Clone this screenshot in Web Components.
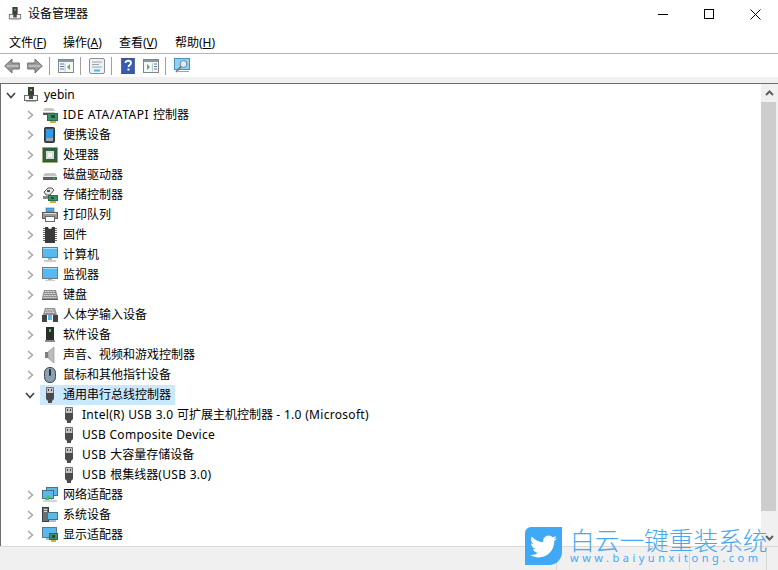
<!doctype html>
<html lang="zh">
<title>设备管理器</title>
<style>
  html, body { margin: 0; height: 100%; background: #fff; }
</style>

<dm-window>
  <dm-titlebar slot="title">设备管理器</dm-titlebar>
  <dm-menubar slot="menu"></dm-menubar>
  <dm-toolbar slot="tools"></dm-toolbar>
  <dm-tree slot="tree">
    <dm-node level="0" state="open" icon="host">yebin</dm-node>
    <dm-node icon="ide"><span style="letter-spacing:.55px">IDE ATA/ATAPI </span>控制器</dm-node>
    <dm-node icon="portable">便携设备</dm-node>
    <dm-node icon="cpu">处理器</dm-node>
    <dm-node icon="disk">磁盘驱动器</dm-node>
    <dm-node icon="storage">存储控制器</dm-node>
    <dm-node icon="printer">打印队列</dm-node>
    <dm-node icon="chip">固件</dm-node>
    <dm-node icon="computer">计算机</dm-node>
    <dm-node icon="monitor">监视器</dm-node>
    <dm-node icon="keyboard">键盘</dm-node>
    <dm-node icon="hid">人体学输入设备</dm-node>
    <dm-node icon="software">软件设备</dm-node>
    <dm-node icon="sound">声音、视频和游戏控制器</dm-node>
    <dm-node icon="mouse">鼠标和其他指针设备</dm-node>
    <dm-node state="open" selected icon="usb">通用串行总线控制器</dm-node>
    <dm-node level="2" state="leaf" icon="usb"><span style="letter-spacing:.3px">Intel(R) USB 3.0 </span>可扩展主机控制器<span style="letter-spacing:.3px"> - 1.0 (Microsoft)</span></dm-node>
    <dm-node level="2" state="leaf" icon="usb"><span style="letter-spacing:.3px">USB Composite Device</span></dm-node>
    <dm-node level="2" state="leaf" icon="usb"><span style="letter-spacing:.5px">USB </span>大容量存储设备</dm-node>
    <dm-node level="2" state="leaf" icon="usb"><span style="letter-spacing:.5px">USB </span>根集线器<span style="letter-spacing:.3px">(USB 3.0)</span></dm-node>
    <dm-node icon="network">网络适配器</dm-node>
    <dm-node icon="system">系统设备</dm-node>
    <dm-node icon="display">显示适配器</dm-node>
  </dm-tree>
  <dm-statusbar slot="status"></dm-statusbar>
  <dm-watermark slot="overlay"></dm-watermark>
</dm-window>

<script>
  const FONT = '"Noto Sans", "Noto Sans CJK SC", sans-serif';

  // all drawn on a 16x16 grid
  const ICONS = {
    host: `<rect x="5" y="0" width="6" height="8" fill="#3c3c3c"/><rect x="7" y="2" width="2" height="2" fill="#4fd04f"/>
      <rect x="1.5" y="8.5" width="13" height="5" fill="#f2f2f2" stroke="#6a6a6a"/><rect x="6" y="8" width="4" height="4" fill="#4a4a4a"/><rect x="3" y="14" width="10" height="1" fill="#b5b5b5"/>`,
    ide: `<path d="M1 4 3 1h8l2 3v4H1z" fill="#c9c9c9"/><rect x="1" y="4" width="12" height="1" fill="#fff"/><rect x="1" y="6" width="7" height="2" fill="#555"/>
      <rect x="5.5" y="6.5" width="10" height="7" fill="#3f8f6b" stroke="#2b6a50"/><rect x="9" y="8" width="4" height="3" fill="#1f4f3a"/><rect x="8" y="14" width="6" height="2" fill="#e2a92c"/>`,
    portable: `<rect x="2.5" y=".5" width="10" height="15" rx="1" fill="#3c4a55" stroke="#30383f"/><rect x="4" y="2" width="7" height="9" fill="#2f9be8"/><rect x="4" y="11" width="7" height="3" fill="#9aa5ac"/>`,
    cpu: `<rect x=".5" y=".5" width="15" height="15" fill="#2f5a3d" stroke="#b9a24a" stroke-dasharray="1 1"/><rect x="2" y="2" width="12" height="12" fill="#2f6143"/><rect x="4" y="4" width="8" height="8" fill="#dcdcdc"/><rect x="6" y="6" width="4" height="4" fill="#f4f4f4"/>`,
    disk: `<path d="M1 9 3 6h10l2 3v4H1z" fill="#c4c4c4"/><rect x="1" y="9" width="14" height="4" fill="#5f5f5f"/><rect x="1" y="9" width="14" height="1" fill="#e9e9e9"/><rect x="11" y="11" width="2" height="1" fill="#3ed23e"/>`,
    storage: `<path d="M2 5 6 1h4l2 2-4 5H4z" fill="#e6e6e6" stroke="#555"/><rect x="5" y="3" width="3" height="2" fill="#555"/><path d="M1 9h6v3H1z" fill="#888"/>
      <rect x="6.5" y="8.5" width="9" height="5" fill="#3f8f6b" stroke="#2b6a50"/><rect x="9" y="10" width="3" height="2" fill="#1f4f3a"/><rect x="8" y="14" width="6" height="2" fill="#e2a92c"/>`,
    printer: `<rect x="4" y="1" width="8" height="4" fill="#4aa8e8" stroke="#3b6f94" stroke-width=".6"/><rect x=".5" y="5.5" width="15" height="6" fill="#9a9a9a" stroke="#5a5a5a"/><rect x="2" y="6" width="12" height="1" fill="#ddd"/><rect x="3.5" y="9.5" width="9" height="5" fill="#fff" stroke="#6a6a6a"/>`,
    chip: `<path d="M1 1.500h2M1 3.500h2M1 5.500h2M1 7.500h2M1 9.500h2M1 11.500h2M1 13.500h2M13 1.500h2M13 3.500h2M13 5.500h2M13 7.500h2M13 9.500h2M13 11.500h2M13 13.500h2" stroke="#6a6a6a"/><path d="M3 0h3a2 2 0 0 0 4 0h3v16H3z" fill="#3a3a3a"/>`,
    computer: `<rect x=".5" y=".5" width="15" height="10" fill="#58b8f0" stroke="#6b7a85"/><rect x="1" y="1" width="14" height="1" fill="#a5dcfa"/><rect x="6" y="11" width="4" height="2" fill="#a8b2b8"/><rect x="2" y="13" width="12" height="2" fill="#c8d0d4"/>`,
    monitor: `<rect x=".5" y=".5" width="15" height="11" fill="#58b8f0" stroke="#6b7a85"/><rect x="1" y="1" width="14" height="1" fill="#a5dcfa"/><rect x="6" y="12" width="4" height="1" fill="#a8b2b8"/><rect x="3" y="13" width="10" height="1" fill="#c8d0d4"/>`,
    keyboard: `<path d="M2 3h12l2 8v2H0v-2z" fill="#8f8f8f"/><path d="M3 4.500h10M2.600 6.500h10.800M2 8.500h12M1.500 10.500h13" stroke="#e9e9e9" stroke-dasharray="1 .6"/><rect x="0" y="12" width="16" height="1" fill="#5c5c5c"/>`,
    hid: `<path d="M3 1h10l2 7H1z" fill="#8f8f8f"/><path d="M4 2.500h8M3.500 4h9M3 5.500h10" stroke="#e9e9e9" stroke-dasharray="1 .6"/><path d="M0 8h5v7H0zM11 8h5v7h-5z" fill="#3f4448"/><path d="M6 8h4v5H6z" fill="#58b8f0"/>`,
    software: `<rect x="4" y="0" width="8" height="13" fill="#2c2c2c"/><rect x="7" y="2" width="2" height="3" fill="#49d04e"/><rect x="3" y="13" width="10" height="2" fill="#8a8a8a"/>`,
    sound: `<path d="M3 5h3v6H3z" fill="#7c7c7c"/><path d="M6 5l6-5v16l-6-5z" fill="#bcbcbc" stroke="#8a8a8a" stroke-width=".6"/>`,
    mouse: `<path d="M8 .5c3.500 0 5.500 2 5.500 6v3c0 4-2 6-5.500 6s-5.500-2-5.500-6v-3c0-4 2-6 5.500-6z" fill="#8aa1b3" stroke="#3c444a"/><rect x="7" y="2" width="2" height="7" rx="1" fill="#2c3136"/>`,
    usb: `<path d="M4.500.5h7v6h-7z" fill="#c4c4c4" stroke="#707070"/><path d="M6 2h1v2H6zM9 2h1v2H9z" fill="#444"/><path d="M4 6h8v6l-2 2v2H6v-2l-2-2z" fill="#4b4b4b"/>`,
    network: `<rect x="4.500" y=".5" width="11" height="8" fill="#58b8f0" stroke="#47727f"/><rect x=".5" y="3.500" width="11" height="8" fill="#58b8f0" stroke="#47727f"/><path d="M6 8l3 3H7v2h3v-1l-1 1H3z" fill="#47c04f"/><rect x="1" y="13" width="14" height="2" fill="#cfd5d8"/>`,
    system: `<rect x=".5" y=".5" width="6" height="14" fill="#6a6f73" stroke="#3b3f42"/><rect x="2" y="2" width="3" height="1" fill="#ddd"/><rect x="2" y="4" width="3" height="1" fill="#ddd"/><rect x="5.500" y="5.500" width="10" height="7" fill="#58b8f0" stroke="#47727f"/><rect x="7" y="13" width="7" height="2" fill="#b6bdc1"/>`,
    display: `<rect x=".5" y=".5" width="14" height="10" fill="#58b8f0" stroke="#5f7784"/><rect x="4" y="11" width="6" height="2" fill="#b6bdc1"/><rect x="7.500" y="6.500" width="8" height="6" fill="#3f8f6b" stroke="#2b6a50"/><rect x="10" y="8" width="3" height="3" fill="#1f4f3a"/><rect x="9" y="13" width="5" height="2" fill="#e2a92c"/>`,
    back: `<path d="M8 1 .7 8 8 15v-4h7.300V5H8z" fill="#999" stroke="#6e6e6e"/><path d="M2.500 8h12" stroke="#b9b9b9" stroke-width="2"/>`,
    forward: `<path d="M8 1l7.300 7L8 15v-4H.7V5H8z" fill="#999" stroke="#6e6e6e"/><path d="M1.500 8h12" stroke="#b9b9b9" stroke-width="2"/>`,
    tree: `<rect x=".5" y="1.500" width="15" height="13" fill="#f4f6f8" stroke="#7d8790"/><rect x="1" y="2" width="14" height="2" fill="#8c979f"/><path d="M2 6h4M2 8.500h4M2 11h4" stroke="#5b7c9a"/><path d="M7 5.500v8" stroke="#b9c2c9"/><path d="M12 6v6l-3-3z" fill="#3fbf4a"/>`,
    props: `<rect x=".5" y=".5" width="15" height="15" rx="1.500" fill="#eef1f3" stroke="#8a939a"/><path d="M3 4h10M3 6.500h7M3 9h10" stroke="#9aa5ac"/><rect x="5" y="11.500" width="6" height="2" fill="#4ab6ec"/>`,
    help: `<rect x="1.500" y="0" width="13" height="16" fill="#3a5ab0" stroke="#27407f" stroke-width=".6"/><path d="M5.500 5c0-3 5.500-3 5.500 0 0 2-2.500 2-2.500 4" fill="none" stroke="#fff" stroke-width="1.800"/><rect x="7.500" y="10.500" width="2" height="2" fill="#fff"/>`,
    action: `<rect x=".5" y="1.500" width="15" height="13" fill="#f4f6f8" stroke="#7d8790"/><rect x="1" y="2" width="14" height="2" fill="#8c979f"/><path d="M11 6h3M11 8.500h3M11 11h3" stroke="#5b7c9a"/><path d="M9.500 5.500v8" stroke="#b9c2c9"/><path d="M4 6v6l3-3z" fill="#3fbf4a"/>`,
    scan: `<rect x=".5" y=".5" width="15" height="11" fill="#8fd0f5" stroke="#4a90c0"/><circle cx="9.500" cy="6" r="3.500" fill="#d5eefb" stroke="#6e8796"/><path d="M7 8.500 2 14" stroke="#6e6e6e" stroke-width="1.500"/><path d="M4 13.500h11" stroke="#9aa5ac"/>`
  };

  // Small base so every element gets an open shadow root from a string
  class Shadowed extends HTMLElement {
    connectedCallback() {
      if (this.shadowRoot) return;
      this.attachShadow({mode: 'open'}).innerHTML = this.render();
    }
  }

  class DmIcon extends Shadowed {
    render() {
      const size = this.getAttribute('size') || 16;
      return `<style>:host{display:block;width:${size}px;height:${size}px;flex:none}svg{display:block}</style>
        <svg width="${size}" height="${size}" viewBox="0 0 16 16">${ICONS[this.getAttribute('name')] || ''}</svg>`;
    }
  }

  class DmWindow extends Shadowed {
    render() {
      return `<style>
        :host{display:grid;grid-template-rows:30px 24px 23px 7px 462px 24px;position:relative;width:778px;height:570px;overflow:hidden;font:12px/20px ${FONT};color:#000;background:#fff}
        .band{background:#f0f0f0;border-bottom:1px solid #6d6d6d;box-sizing:border-box}
        ::slotted([slot=tree]){min-height:0}
      </style>
      <slot name="title"></slot><slot name="menu"></slot><slot name="tools"></slot>
      <div class="band"></div>
      <slot name="tree"></slot><slot name="status"></slot><slot name="overlay"></slot>`;
    }
  }

  class DmTitlebar extends Shadowed {
    render() {
      return `<style>
        :host{display:flex;align-items:center;padding-left:8px}
        dm-icon{margin:-2px 6px 0 0}
        .text{flex:1;position:relative;top:-1px}
        .btn{width:46px;height:30px;display:flex;align-items:center;justify-content:center;position:relative;top:-1px}
        svg{display:block}
      </style>
      <dm-icon name="host" size="14"></dm-icon>
      <span class="text"><slot></slot></span>
      <span class="btn"><svg width="10" height="10"><path d="M0 5.500h10" stroke="#000"/></svg></span>
      <span class="btn"><svg width="10" height="10"><rect x=".5" y=".5" width="9" height="9" fill="none" stroke="#000"/></svg></span>
      <span class="btn"><svg width="11" height="11"><path d="M.5.5l10 10M10.500.5l-10 10" stroke="#000"/></svg></span>`;
    }
  }

  class DmMenubar extends Shadowed {
    render() {
      const items = [['文件', 'F', 38], ['操作', 'A', 40], ['查看', 'V', 40], ['帮助', 'H', 40]];
      return `<style>
        :host{display:flex;gap:16px;padding:0 0 0 9px;align-items:center;border-bottom:1px solid #b4b4c0;box-sizing:border-box}
        span{display:block;white-space:nowrap;position:relative;top:1px}
        u{text-underline-offset:1px}
      </style>` + items.map(([t, k, w]) => `<span style="width:${w}px">${t}(<u>${k}</u>)</span>`).join('');
    }
  }

  class DmToolbar extends Shadowed {
    render() {
      const groups = [['back', 'forward'], ['tree'], ['props'], ['help', 'action'], ['scan']];
      const body = groups.map(g =>
        `<div class="group">${g.map(n => `<dm-icon name="${n}"></dm-icon>`).join('')}</div>`
      ).join('<i></i>');
      return `<style>
        :host{display:flex;align-items:center;padding:1px 0 0 4px;gap:8px;box-sizing:border-box}
        .group{display:flex;gap:7px}
        i{display:block;width:1px;height:18px;background:#a0a0a0;margin-left:-2px}
      </style>` + body;
    }
  }

  class DmTree extends Shadowed {
    render() {
      return `<style>
        :host{display:grid;grid-template-columns:1fr 17px;border-left:1px solid #6d6d6d;overflow:hidden;box-sizing:border-box}
        .rows{overflow:hidden;padding-top:1px}
        .bar{display:grid;grid-template-rows:17px 1fr 17px;background:#f0f0f0}
        .arrow{display:flex;align-items:center;justify-content:center}
        .thumb{padding:1px 2px 18px 0}
        .thumb div{height:100%;background:#cdcdcd}
      </style>
      <div class="rows"><slot></slot></div>
      <div class="bar">
        <div class="arrow"><svg width="9" height="6"><path d="M1 5l3.500-3.500L8 5" fill="none" stroke="#606060" stroke-width="2"/></svg></div>
        <div class="thumb"><div></div></div>
        <div class="arrow"><svg width="9" height="6"><path d="M1 1l3.500 3.500L8 1" fill="none" stroke="#606060" stroke-width="2"/></svg></div>
      </div>`;
    }
  }

  class DmNode extends Shadowed {
    render() {
      const level = +(this.getAttribute('level') || 1);
      const state = this.getAttribute('state') || 'closed';
      const twisty = {
        closed: '<svg width="7" height="10"><path d="M1 1l4.500 4L1 9" fill="none" stroke="#a6a6a6" stroke-width="1.500"/></svg>',
        open: '<svg width="10" height="7"><path d="M1 1l4 4.500L9 1" fill="none" stroke="#404040" stroke-width="1.500"/></svg>',
        leaf: ''
      }[state];
      return `<style>
        :host{display:flex;height:20px;align-items:center;padding-left:${5 + 19 * level}px;white-space:nowrap}
        .twisty{width:10px;margin-right:5px;display:flex;justify-content:center;flex:none}
        .item{display:flex;align-items:center;gap:5px;height:20px;padding:0 4px 0 2px}
        :host([selected]) .item{background:#cce8ff}
      </style>
      <span class="twisty">${twisty}</span>
      <span class="item"><dm-icon name="${this.getAttribute('icon')}"></dm-icon><span><slot></slot></span></span>`;
    }
  }

  class DmStatusbar extends Shadowed {
    render() {
      return `<style>
        :host{display:grid;grid-template-columns:557px 133px 77px 1fr;background:#f0f0f0;border-top:1px solid #d9d9d9;box-sizing:border-box}
        div{border-right:1px solid #d9d9d9}
      </style><div></div><div></div><div></div>`;
    }
  }

  class DmWatermark extends Shadowed {
    render() {
      return `<style>
        :host{position:absolute;left:525px;top:527px;display:flex;gap:8px;color:#45a9f2;font-family:"Noto Sans CJK SC","Noto Sans",sans-serif}
        .logo{width:37px;height:38px;background:#3fa9f5;border-radius:6px 0 13px 0;display:flex;align-items:center;justify-content:center}
        .name{font-size:24.700px;line-height:25px;font-weight:300;white-space:nowrap}
        .url{font:11px/12px "Noto Sans",sans-serif;letter-spacing:3.500px;white-space:nowrap}
      </style>
      <div class="logo"><svg width="27" height="27" viewBox="0 0 24 24"><path fill="#fff" d="M23.950 4.570a10 10 0 0 1-2.820.77 4.960 4.960 0 0 0 2.160-2.720c-.95.55-2 .96-3.120 1.190a4.920 4.920 0 0 0-8.380 4.480C7.690 8.090 4.070 6.130 1.640 3.160a4.820 4.820 0 0 0-.67 2.480c0 1.710.87 3.210 2.190 4.100a4.900 4.900 0 0 1-2.230-.61v.06c0 2.390 1.700 4.380 3.950 4.840-.41.11-.85.17-1.300.17-.31 0-.62-.03-.93-.08.63 1.960 2.450 3.390 4.600 3.430A9.870 9.870 0 0 1 0 19.540a13.940 13.940 0 0 0 7.550 2.210c9.060 0 14-7.500 14-13.980 0-.21 0-.42-.01-.63.96-.69 1.790-1.560 2.450-2.550z"/></svg></div>
      <div><div class="name">白云一键重装系统</div><div class="url">www.baiyunxitong.com</div></div>`;
    }
  }

  customElements.define('dm-icon', DmIcon);
  customElements.define('dm-window', DmWindow);
  customElements.define('dm-titlebar', DmTitlebar);
  customElements.define('dm-menubar', DmMenubar);
  customElements.define('dm-toolbar', DmToolbar);
  customElements.define('dm-tree', DmTree);
  customElements.define('dm-node', DmNode);
  customElements.define('dm-statusbar', DmStatusbar);
  customElements.define('dm-watermark', DmWatermark);
</script>
</html>
